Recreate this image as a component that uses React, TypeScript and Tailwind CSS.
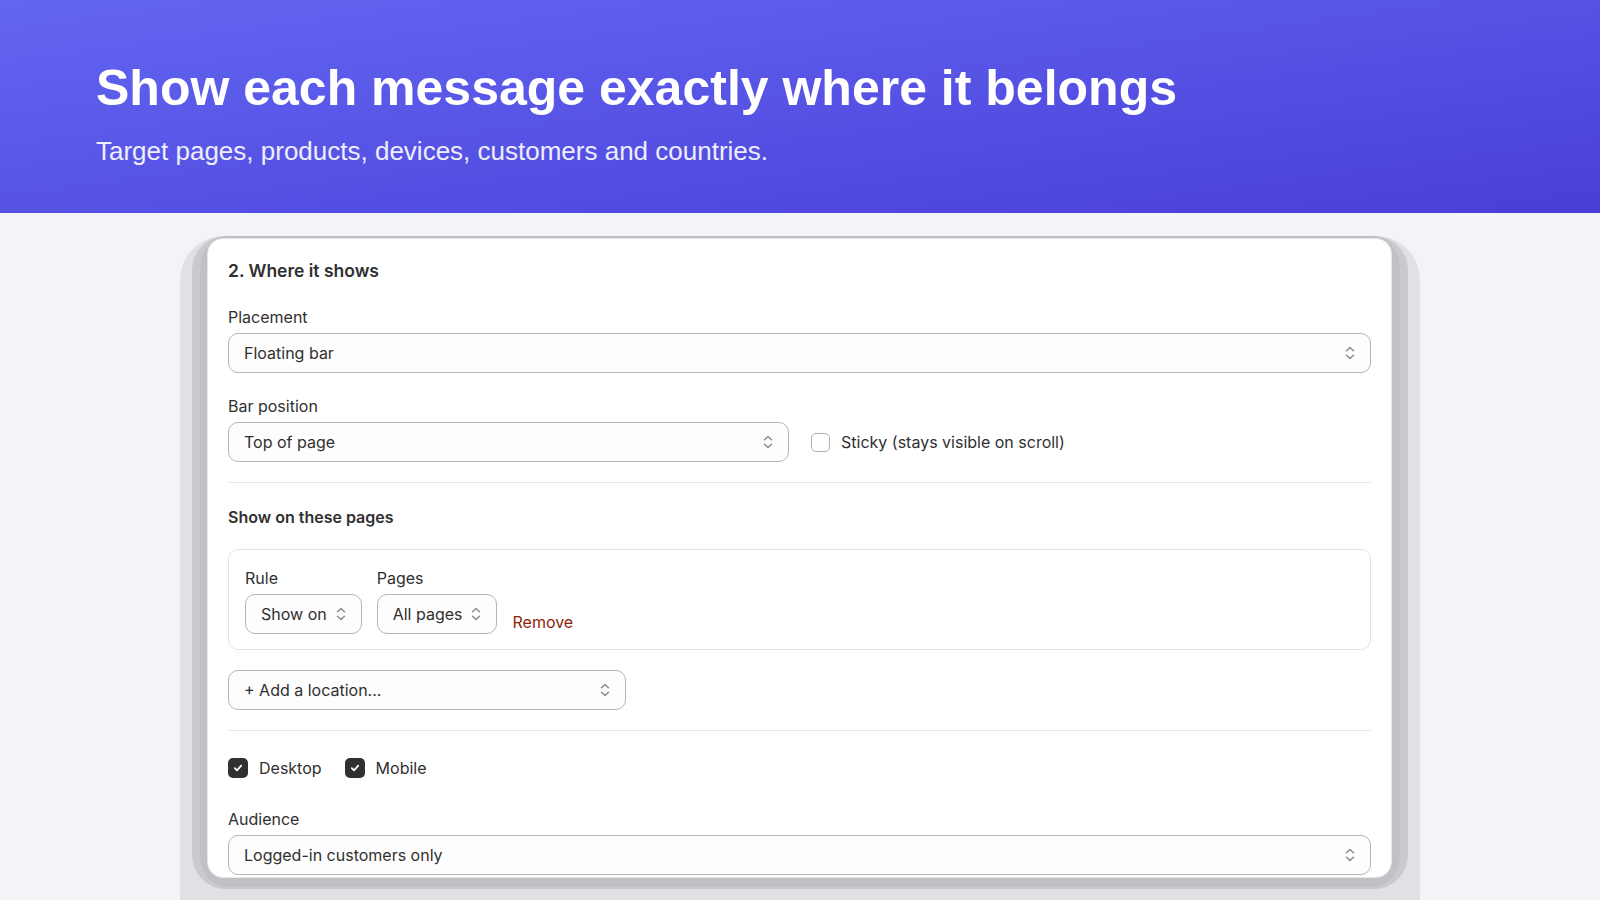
import type { ReactNode } from "react";

function Chevrons() {
  return (
    <svg width="20" height="20" viewBox="0 0 20 20" fill="none" className="shrink-0 text-[#8a8a8a]">
      <path d="M6.5 7.75 10 4.5l3.5 3.25" stroke="currentColor" strokeWidth="1.5" strokeLinecap="round" strokeLinejoin="round" />
      <path d="M6.5 12.25 10 15.5l3.5-3.25" stroke="currentColor" strokeWidth="1.5" strokeLinecap="round" strokeLinejoin="round" />
    </svg>
  );
}

function SelectBox({ value, className = "" }: { value: string; className?: string }) {
  return (
    <div
      className={`flex h-10 items-center justify-between gap-1 rounded-[10px] border border-[#b5b5b5] bg-[#fdfdfd] pl-[15px] pr-[10px] text-base text-[#303030] ${className}`}
    >
      <span className="truncate">{value}</span>
      <Chevrons />
    </div>
  );
}

function Label({ children }: { children: ReactNode }) {
  return <div className="mb-1 text-base leading-6 text-[#303030]">{children}</div>;
}

function Checkbox({ checked, label }: { checked?: boolean; label: string }) {
  return (
    <label className="flex items-center gap-[11px] text-base text-[#303030]">
      {checked ? (
        <span className="flex h-5 w-5 items-center justify-center rounded-[5px] bg-[#303030]">
          <svg width="12" height="12" viewBox="0 0 12 12" fill="none">
            <path d="M2.8 6.2 5 8.3l4.2-4.6" stroke="white" strokeWidth="1.8" strokeLinecap="round" strokeLinejoin="round" />
          </svg>
        </span>
      ) : (
        <span className="h-[19px] w-[19px] rounded-[5px] border border-[#b0b0b0] bg-white" />
      )}
      {label}
    </label>
  );
}

function Divider() {
  return <div className="h-px bg-[#e8e8e8]" />;
}

export default function App() {
  return (
    <div className="h-screen overflow-hidden bg-[#f3f4f8]">
      <header
        className="h-[213px] bg-linear-to-br from-[#6366f1] to-[#4a3dd8] pl-24 pt-[58px] text-white"
        style={{ fontFamily: '"Liberation Sans", Arial, sans-serif' }}
      >
        <h1 className="text-[50px] font-bold leading-[60px]">Show each message exactly where it belongs</h1>
        <p className="mt-[15px] text-[26px] leading-9 text-white/90">
          Target pages, products, devices, customers and countries.
        </p>
      </header>

      <div className="flex justify-center pt-[23px]">
        <div className="h-[700px] w-[1240px] rounded-t-[44px] bg-[#dfe1e5] px-3">
          <div className="rounded-[34px] border-x-8 border-b-2 border-[#c9cacf] bg-[#c0c1c6] pb-[9px] pl-[7px] pr-[8px] pt-[2px]">
            <div
              className="h-[640px] overflow-hidden rounded-2xl border border-[#e6e6e6] bg-white px-5 pt-5 text-[#303030]"
              style={{ fontFamily: "Inter, 'Noto Sans', sans-serif" }}
            >
              <h2 className="text-[17.5px] font-semibold leading-6">2. Where it shows</h2>

              <div className="mt-[22px]">
                <Label>Placement</Label>
                <SelectBox value="Floating bar" />
              </div>

              <div className="mt-[21px]">
                <Label>Bar position</Label>
                <div className="flex items-center gap-[22px]">
                  <SelectBox value="Top of page" className="w-[561px]" />
                  <Checkbox label="Sticky (stays visible on scroll)" />
                </div>
              </div>

              <div className="mt-5">
                <Divider />
              </div>

              <h3 className="mt-[22px] text-base font-semibold leading-6">Show on these pages</h3>

              <div className="mt-5 rounded-[10px] border border-[#e3e3e3] px-4 pb-[15px] pt-4">
                <div className="flex items-end gap-[15px]">
                  <div>
                    <Label>Rule</Label>
                    <SelectBox value="Show on" />
                  </div>
                  <div>
                    <Label>Pages</Label>
                    <SelectBox value="All pages" />
                  </div>
                  <span className="text-base leading-6 text-[#8e1f0b]">Remove</span>
                </div>
              </div>

              <SelectBox value="+ Add a location..." className="mt-5 w-[398px]" />

              <div className="mt-5">
                <Divider />
              </div>

              <div className="mt-[25px] flex items-center gap-[23px]">
                <Checkbox checked label="Desktop" />
                <Checkbox checked label="Mobile" />
              </div>

              <div className="mt-[27px]">
                <Label>Audience</Label>
                <SelectBox value="Logged-in customers only" />
              </div>
            </div>
          </div>
        </div>
      </div>
    </div>
  );
}
